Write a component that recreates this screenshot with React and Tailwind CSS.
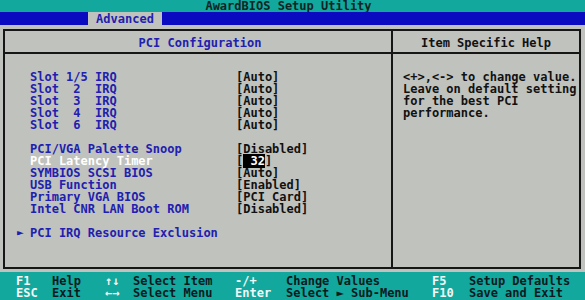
import React from "react";

const slots = [
  ["Slot 1/5 IRQ", "[Auto]"],
  ["Slot  2  IRQ", "[Auto]"],
  ["Slot  3  IRQ", "[Auto]"],
  ["Slot  4  IRQ", "[Auto]"],
  ["Slot  6  IRQ", "[Auto]"],
];

const opts = [
  ["PCI/VGA Palette Snoop", "[Disabled]"],
  ["PCI Latency Timer", null],
  ["SYMBIOS SCSI BIOS", "[Auto]"],
  ["USB Function", "[Enabled]"],
  ["Primary VGA BIOS", "[PCI Card]"],
  ["Intel CNR LAN Boot ROM", "[Disabled]"],
];

function Row({ label, value, selected }) {
  return (
    <div className="flex h-[12px] whitespace-pre">
      <div className={`w-[206px] ${selected ? "text-white" : "text-[#2020b0]"}`}>{label}</div>
      <div className="text-[#111]">
        {value ?? (
          <>
            [<span className="bg-black text-white"> 32</span>]
          </>
        )}
      </div>
    </div>
  );
}

function FooterRow({ cells }) {
  const widths = ["w-[36px]", "w-[53px]", "w-[28px]", "w-[102px]", "w-[51px]", "w-[146px]", "w-[37px]", ""];
  return (
    <div className="flex h-[12px] whitespace-pre pl-[16px]">
      {cells.map((c, i) => (
        <div key={i} className={`${widths[i]} ${i % 2 === 0 ? "text-[#f2f6f4]" : "text-[#0c1a20]"}`}>
          {c}
        </div>
      ))}
    </div>
  );
}

export default function App() {
  return (
    <div className="w-[585px] h-[300px] bg-[#c0c2bd] flex flex-col font-['DejaVu_Sans_Mono',monospace] font-bold text-[12px] leading-[12px] overflow-hidden">
      <div className="h-[12px] bg-[#12a89e] flex items-center justify-center pr-[8px] text-[#102424]">
        AwardBIOS Setup Utility
      </div>
      <div className="h-[13px] bg-[#0a0ac0] flex pl-[88px]">
        <div className="w-[74px] bg-[#c0c2bd] text-[#2020b0] flex items-center justify-center">
          Advanced
        </div>
      </div>
      <div className="flex-1 pt-[4px] pb-[3px] pl-[3px] pr-[4px] flex">
        <div className="flex-1 border-2 border-[#161616] flex flex-col">
          <div className="h-[23px] border-b-2 border-[#161616] flex">
            <div className="w-[386px] flex items-center justify-center text-[#2020b0] pl-[4px] pt-[2px]">
              PCI Configuration
            </div>
            <div className="w-[2px] bg-[#161616]" />
            <div className="flex-1 flex items-center justify-center text-[#111] pt-[2px]">
              Item Specific Help
            </div>
          </div>
          <div className="flex-1 flex">
            <div className="w-[386px] pt-[17px] pl-[25px]">
              {slots.map(([l, v]) => (
                <Row key={l} label={l} value={v} />
              ))}
              <div className="h-[12px]" />
              {opts.map(([l, v]) => (
                <Row key={l} label={l} value={v} selected={l === "PCI Latency Timer"} />
              ))}
              <div className="h-[12px]" />
              <div className="flex h-[12px] text-[#2020b0] -ml-[13px] whitespace-pre">
                <span className="w-[13px] text-[11px]">►</span>
                <span>PCI IRQ Resource Exclusion</span>
              </div>
            </div>
            <div className="w-[2px] bg-[#161616]" />
            <div className="flex-1 pt-[17px] pl-[10px] text-[#111] whitespace-pre">
              <div className="h-[12px]">{"<+>,<-> to change value."}</div>
              <div className="h-[12px]">Leave on default setting</div>
              <div className="h-[12px]">for the best PCI</div>
              <div className="h-[12px]">performance.</div>
            </div>
          </div>
        </div>
      </div>
      <div className="h-[28px] bg-[#12a89e] pt-[3px]">
        <FooterRow cells={["F1", "Help", "↑↓", "Select Item", "-/+", "Change Values", "F5", "Setup Defaults"]} />
        <FooterRow cells={["ESC", "Exit", "←→", "Select Menu", "Enter", "Select ► Sub-Menu", "F10", "Save and Exit"]} />
      </div>
    </div>
  );
}
